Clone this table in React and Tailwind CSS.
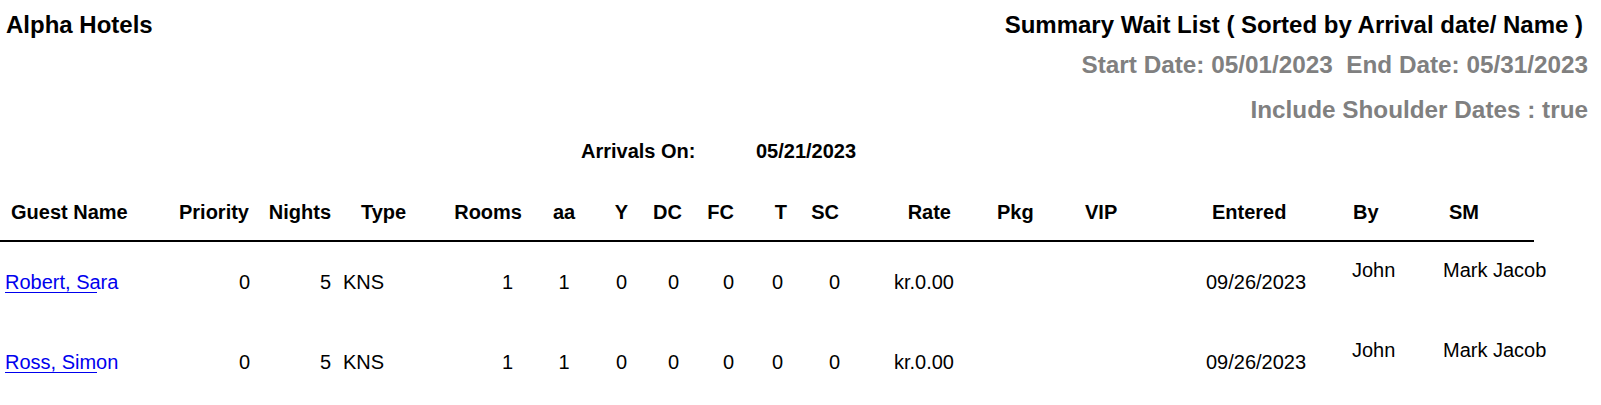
const columns = [
  { key: "guest", label: "Guest Name", w: "w-[170px]", head: "pl-[11px]", cell: "pl-[5px]" },
  { key: "priority", label: "Priority", w: "w-[85px]", head: "text-right pr-[6px]", cell: "text-right pr-[5px]" },
  { key: "nights", label: "Nights", w: "w-[81px]", head: "text-right pr-[5px]", cell: "text-right pr-[5px]" },
  { key: "type", label: "Type", w: "w-[94px]", head: "pl-[25px]", cell: "pl-[7px]" },
  { key: "rooms", label: "Rooms", w: "w-[108px]", head: "text-right pr-[16px]", cell: "text-right pr-[25px]" },
  { key: "aa", label: "aa", w: "w-[52px]", head: "text-center", cell: "text-center" },
  { key: "y", label: "Y", w: "w-[63px]", head: "text-center", cell: "text-center" },
  { key: "dc", label: "DC", w: "w-[47px]", head: "text-right pr-[20px]", cell: "text-right pr-[21px]" },
  { key: "fc", label: "FC", w: "w-[55px]", head: "text-right pr-[21px]", cell: "text-right pr-[21px]" },
  { key: "t", label: "T", w: "w-[45px]", head: "text-right pr-[13px]", cell: "text-right pr-[17px]" },
  { key: "sc", label: "SC", w: "w-[60px]", head: "text-right pr-[21px]", cell: "text-right pr-[20px]" },
  { key: "rate", label: "Rate", w: "w-[120px]", head: "text-right pr-[29px]", cell: "text-right pr-[26px]" },
  { key: "pkg", label: "Pkg", w: "w-[80px]", head: "pl-[17px]", cell: "" },
  { key: "vip", label: "VIP", w: "w-[90px]", head: "pl-[25px]", cell: "" },
  { key: "entered", label: "Entered", w: "w-[180px]", head: "pl-[62px]", cell: "pl-[56px]" },
  { key: "by", label: "By", w: "w-[90px]", head: "pl-[23px]", cell: "pl-[22px] self-start pt-[16px]" },
  { key: "sm", label: "SM", w: "w-[114px]", head: "pl-[29px]", cell: "pl-[23px] self-start pt-[16px] whitespace-nowrap" },
];

const waitList = [
  { guest: "Robert, Sara", priority: 0, nights: 5, type: "KNS", rooms: 1, aa: 1, y: 0, dc: 0, fc: 0, t: 0, sc: 0, rate: "kr.0.00", pkg: "", vip: "", entered: "09/26/2023", by: "John", sm: "Mark Jacob" },
  { guest: "Ross, Simon", priority: 0, nights: 5, type: "KNS", rooms: 1, aa: 1, y: 0, dc: 0, fc: 0, t: 0, sc: 0, rate: "kr.0.00", pkg: "", vip: "", entered: "09/26/2023", by: "John", sm: "Mark Jacob" },
];

export default function App() {
  return (
    <div className="w-[1601px] h-[405px] bg-white text-black font-['Liberation_Sans',Arial,sans-serif] overflow-hidden">
      {/* report heading */}
      <div className="flex justify-between items-start pt-[11px] pl-[6px] pr-[13px]">
        <h1 className="text-[24px] leading-[28px] font-bold">Alpha Hotels</h1>
        <div className="flex flex-col items-end text-[24px] leading-[28px] font-bold">
          <h2 className="mr-[5px]">Summary Wait List ( Sorted by Arrival date/ Name )</h2>
          <p className="mt-[12px] text-[24.3px] text-[#808080] whitespace-pre">Start Date: 05/01/2023  End Date: 05/31/2023</p>
          <p className="mt-[17px] text-[24.3px] text-[#808080]">Include Shoulder Dates : true</p>
        </div>
      </div>

      <div className="flex pl-[581px] mt-[15px] text-[20px] leading-[24px] font-bold">
        <span className="w-[175px]">Arrivals On:</span>
        <span>05/21/2023</span>
      </div>

      {/* table header */}
      <div className="flex w-[1534px] h-[42px] mt-[37px] border-b-2 border-black text-[20px] leading-[24px] font-bold">
        {columns.map((c) => (
          <div key={c.key} className={`${c.w} ${c.head} shrink-0 whitespace-nowrap`}>
            {c.label}
          </div>
        ))}
      </div>

      {waitList.map((row) => (
        <div key={row.guest} className="flex items-center w-[1534px] h-[80px] text-[20px] leading-[24px]">
          {columns.map((c) => (
            <div key={c.key} className={`${c.w} ${c.cell} shrink-0`}>
              {c.key === "guest" ? (
                <a
                  href="#"
                  className="text-[#0000ee] bg-[linear-gradient(#0000ee,#0000ee)] bg-no-repeat bg-[length:92px_1px] bg-bottom-left"
                >
                  {row.guest}
                </a>
              ) : (
                row[c.key]
              )}
            </div>
          ))}
        </div>
      ))}
    </div>
  );
}
